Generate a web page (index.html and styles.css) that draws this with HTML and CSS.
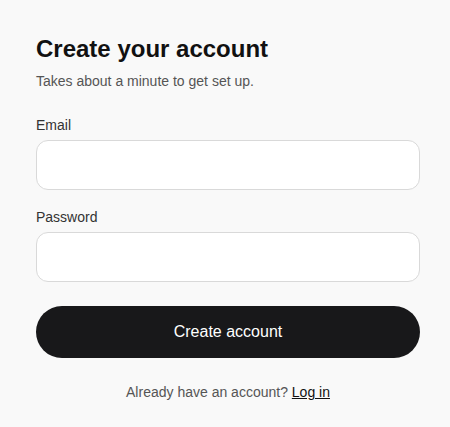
FILE: index.html
```html
<!DOCTYPE html>
<html lang="en">
<head>
<meta charset="utf-8">
<title>Create your account</title>
<link rel="stylesheet" href="styles.css">
</head>
<body>
<main class="signup">
  <h1 class="title">Create your account</h1>
  <p class="subtitle">Takes about a minute to get set up.</p>
  <form class="form">
    <div class="field">
      <label class="label" for="email">Email</label>
      <input class="input" id="email" type="email">
    </div>
    <div class="field">
      <label class="label" for="password">Password</label>
      <input class="input" id="password" type="password">
    </div>
    <button class="submit" type="button">Create account</button>
  </form>
  <p class="footer">Already have an account? <a class="link" href="#">Log in</a></p>
</main>
</body>
</html>
```
FILE: styles.css
```css
html, body {
  margin: 0;
  padding: 0;
  background: #f9f9f9;
}
body {
  font-family: "Liberation Sans", Arial, sans-serif;
  color: #111;
}
.signup {
  width: 384px;
  padding: 35px 0 0 36px;
  display: flex;
  flex-direction: column;
}
.title {
  margin: 0;
  font-size: 24px;
  line-height: 28px;
  font-weight: 700;
  color: #111;
}
.subtitle {
  margin: 8px 0 0;
  font-size: 14px;
  line-height: 20px;
  color: #555;
}
.form {
  margin-top: 24px;
  display: flex;
  flex-direction: column;
}
.field {
  display: flex;
  flex-direction: column;
  gap: 5px;
  margin-bottom: 17px;
}
.field:last-of-type {
  margin-bottom: 24px;
}
.label {
  font-size: 14px;
  line-height: 20px;
  color: #333;
}
.input {
  box-sizing: border-box;
  height: 50px;
  width: 100%;
  margin: 0;
  border: 1px solid #d9d9d9;
  border-radius: 12px;
  background: #fff;
  padding: 0 14px;
  font: inherit;
  font-size: 15px;
  outline: none;
}
.submit {
  height: 52px;
  width: 100%;
  border: none;
  border-radius: 26px;
  background: #18181a;
  color: #fff;
  font-family: "Liberation Sans", Arial, sans-serif;
  font-size: 16px;
  cursor: pointer;
}
.footer {
  margin: 24px 0 0;
  font-size: 14px;
  line-height: 20px;
  color: #555;
  text-align: center;
}
.link {
  color: #111;
  text-decoration: underline;
}
```
